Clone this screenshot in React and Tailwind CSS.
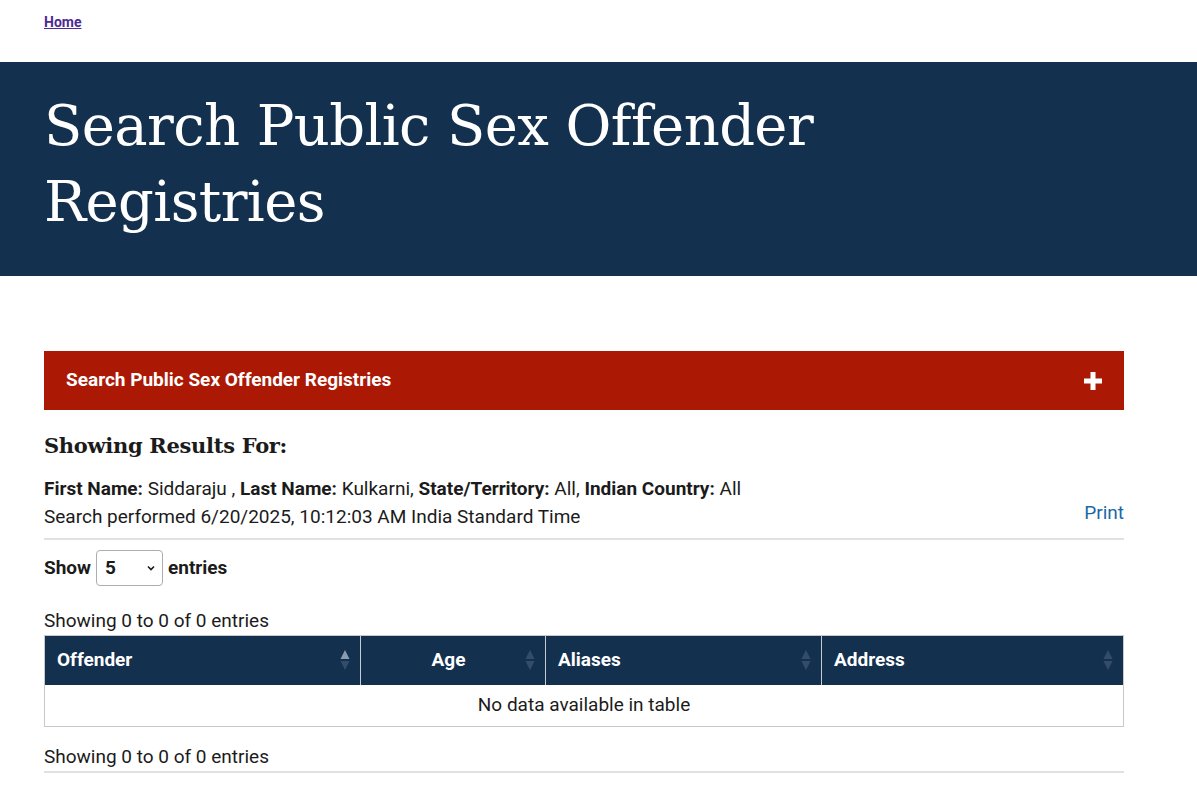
import React from 'react';

const SortIcon = ({ active }) => (
    <svg width="12" height="22" viewBox="0 0 12 22" className="shrink-0">
        <path d="M6 1 L10.5 10 L1.5 10 Z" fill={active ? '#8a9ab0' : '#344c6b'} />
        <path d="M6 21 L10.5 12 L1.5 12 Z" fill="#344c6b" />
    </svg>
);

const Th = ({ children, align = 'left', active, className = '' }) => (
    <th className={`h-[49px] pl-3 pr-[9px] border-r border-[#c7ccd3] last:border-r-0 ${className}`}>
        <div className="flex items-center">
            <span className={`flex-1 ${align === 'center' ? 'text-center' : 'text-left'}`}>{children}</span>
            <SortIcon active={active} />
        </div>
    </th>
);

const App = () => {
    return (
        <div className="min-h-[810px] bg-white font-['Roboto',sans-serif] text-[#1b1b1b]">
            {/* breadcrumb */}
            <div className="h-[62px] px-11 pt-[10px]">
                <a href="#" className="text-[14px] font-bold text-[#4c2c92] underline">Home</a>
            </div>

            {/* banner */}
            <div className="bg-[#13304f] h-[214px] px-11 pt-[26px]">
                <h1 className="font-['DejaVu_Serif',serif] text-white text-[56px] leading-[76px] max-w-[820px] tracking-[-0.6px]">
                    Search Public Sex Offender Registries
                </h1>
            </div>

            <div className="px-11 pt-[75px] w-[1168px]">
                {/* accordion */}
                <div className="bg-[#ab1905] h-[59px] flex items-center justify-between pl-[22px] pr-[22px]">
                    <span className="text-white font-bold text-[19px]">Search Public Sex Offender Registries</span>
                    <svg width="18" height="18" viewBox="0 0 18 18">
                        <rect x="6.5" y="0" width="5" height="18" fill="white" />
                        <rect x="0" y="6.5" width="18" height="5" fill="white" />
                    </svg>
                </div>

                <h2 className="font-['DejaVu_Serif',serif] font-bold text-[21px] mt-[21px] leading-[30px] tracking-[-0.3px]">Showing Results For:</h2>

                <p className="text-[19px] mt-[14px] leading-[28px]">
                    <b>First Name:</b> Siddaraju , <b>Last Name:</b> Kulkarni, <b>State/Territory:</b> All, <b>Indian Country:</b> All
                </p>
                <div className="flex items-end justify-between border-b-2 border-[#dfe1e2] pb-[7px]">
                    <span className="text-[19px] leading-[28px]">Search performed 6/20/2025, 10:12:03 AM India Standard Time</span>
                    <a href="#" className="text-[#1a68a8] text-[19px] leading-[28px] -translate-y-[4px]">Print</a>
                </div>

                <div className="flex items-center gap-[5px] mt-[10px] text-[19px] font-bold">
                    <span>Show</span>
                    <div className="w-[67px] h-[36px] border border-[#a9aeb1] rounded-[4px] flex items-center justify-between pl-[8px] pr-[6px]">
                        <span>5</span>
                        <svg width="10" height="10" viewBox="0 0 10 10"><path d="M2 3.5 L5 6.5 L8 3.5" stroke="#1b1b1b" strokeWidth="1.6" fill="none" /></svg>
                    </div>
                    <span>entries</span>
                </div>

                <p className="text-[19px] mt-[21px] leading-[28px]">Showing 0 to 0 of 0 entries</p>

                <table className="w-full border-collapse border border-[#c9c9c9] text-[19px]">
                    <thead>
                        <tr className="bg-[#13304f] text-white font-bold">
                            <Th active className="w-[316px]">Offender</Th>
                            <Th align="center" className="w-[185px]">Age</Th>
                            <Th className="w-[276px]">Aliases</Th>
                            <Th>Address</Th>
                        </tr>
                    </thead>
                    <tbody>
                        <tr>
                            <td colSpan={4} className="h-[42px] text-center">No data available in table</td>
                        </tr>
                    </tbody>
                </table>

                <p className="text-[19px] mt-[16px] leading-[28px] border-b-2 border-[#dfe1e2]">Showing 0 to 0 of 0 entries</p>
            </div>
        </div>
    );
};

export default App;
